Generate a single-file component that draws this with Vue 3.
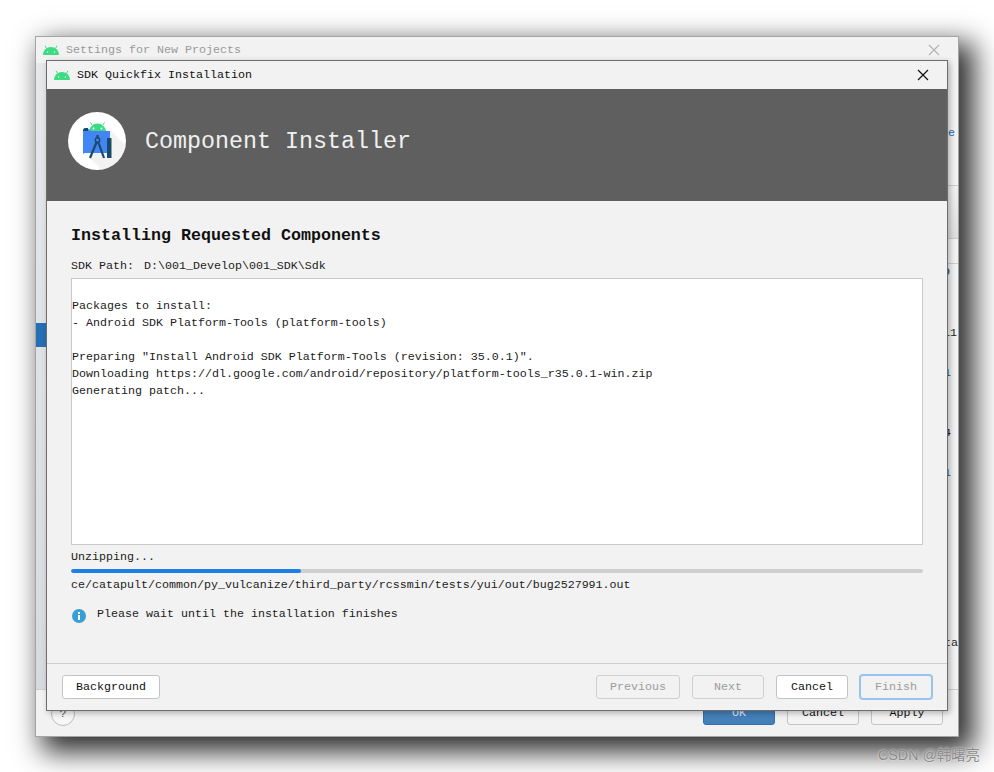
<script setup>
const logLines = [
  '',
  'Packages to install:',
  '- Android SDK Platform-Tools (platform-tools)',
  '',
  'Preparing "Install Android SDK Platform-Tools (revision: 35.0.1)".',
  'Downloading https://dl.google.com/android/repository/platform-tools_r35.0.1-win.zip',
  'Generating patch...'
]
const peeks = [
  { h: 60, text: '', cls: '', pr: 0 },
  { h: 20, text: 'e', cls: 'blue', pr: 3 },
  { h: 43, text: '', cls: 'line', pr: 0 },
  { h: 53, text: '', cls: 'band', pr: 0 },
  { h: 25, text: '', cls: 'line', pr: 0 },
  { h: 16, text: '0', cls: '', pr: 8 },
  { h: 45, text: '', cls: '', pr: 0 },
  { h: 16, text: '11', cls: '', pr: 1 },
  { h: 24, text: '', cls: '', pr: 0 },
  { h: 16, text: '1', cls: 'teal', pr: 7 },
  { h: 44, text: '', cls: '', pr: 0 },
  { h: 16, text: '4', cls: '', pr: 7 },
  { h: 24, text: '', cls: '', pr: 0 },
  { h: 16, text: '1', cls: 'teal', pr: 7 },
  { h: 154, text: '', cls: '', pr: 0 },
  { h: 16, text: 'ta', cls: '', pr: 0 }
]
</script>

<template>
  <div class="desk">
    <section class="win outer">
      <header class="outer-title">
        <svg class="droid" viewBox="0 0 16 10"><path d="M0 10a8 8 0 0 1 16 0z" fill="#3ddc84"/><path d="M3.6 3.6 2 .8M12.4 3.6 14 .8" stroke="#3ddc84" stroke-width="1"/><circle cx="4.6" cy="7" r=".7" fill="#e8f8ef"/><circle cx="11.4" cy="7" r=".7" fill="#e8f8ef"/></svg>
        <span>Settings for New Projects</span>
        <svg class="close faint" viewBox="0 0 12 12"><path d="M1 1l10 10M11 1 1 11" stroke="#b4b4b4" stroke-width="1.2"/></svg>
      </header>
      <div class="outer-body">
        <aside class="side"><div class="sel"></div></aside>
        <div class="peek-col">
          <div v-for="(p, i) in peeks" :key="i" class="peek" :class="p.cls" :style="{ height: p.h + 'px', paddingRight: p.pr + 'px' }">{{ p.text }}</div>
        </div>
      </div>
      <footer class="outer-foot">
        <span class="help">?</span>
        <div class="foot-btns">
          <span class="obtn ok">OK</span>
          <span class="obtn">Cancel</span>
          <span class="obtn">Apply</span>
        </div>
      </footer>
    </section>

    <section class="win inner">
      <header class="inner-title">
        <svg class="droid" viewBox="0 0 16 10"><path d="M0 10a8 8 0 0 1 16 0z" fill="#3ddc84"/><path d="M3.6 3.6 2 .8M12.4 3.6 14 .8" stroke="#3ddc84" stroke-width="1"/><circle cx="4.6" cy="7" r=".7" fill="#e8f8ef"/><circle cx="11.4" cy="7" r=".7" fill="#e8f8ef"/></svg>
        <span>SDK Quickfix Installation</span>
        <svg class="close" viewBox="0 0 12 12"><path d="M1 1l10 10M11 1 1 11" stroke="#111" stroke-width="1.2"/></svg>
      </header>
      <div class="banner">
        <svg class="logo" viewBox="0 0 58 58">
          <defs><clipPath id="disc"><circle cx="29" cy="29" r="29"/></clipPath></defs>
          <circle cx="29" cy="29" r="29" fill="#fff"/>
          <path d="M42 18 58 34V58H34L20 44z" fill="#ececec" clip-path="url(#disc)" opacity=".7"/>
          <path d="M21 20a8.500 8.500 0 0 1 17 0v2H21z" fill="#3ddc84"/>
          <path d="M24 13 22.500 10.500M35 13 36.500 10.500" stroke="#3ddc84" stroke-width="1"/>
          <circle cx="25.500" cy="16.500" r="1" fill="#fff"/><circle cx="33.500" cy="16.500" r="1" fill="#fff"/>
          <path d="M15 19c0-2 1-3 3-3 3 0 3 3 6 3h18v22H18a3 3 0 0 0-3 1z" fill="#4285f4"/>
          <path d="M15 19c0-2 1-3 3-3h2v3z" fill="#1a4a68"/>
          <path d="M29.500 23v3M29.500 28l-7.500 18M29.500 28l6.500 18" stroke="#1a4a68" stroke-width="2.200" fill="none"/>
          <circle cx="29.500" cy="28" r="2.200" fill="#4285f4" stroke="#1a4a68" stroke-width="1.400"/>
          <rect x="39" y="26" width="4.500" height="20" rx=".6" fill="#1a4a68"/>
        </svg>
        <span class="banner-text">Component Installer</span>
      </div>
      <main class="content">
        <h2>Installing Requested Components</h2>
        <div class="path-row"><span>SDK Path:</span><span>D:\001_Develop\001_SDK\Sdk</span></div>
        <div class="log">
          <div v-for="(l, i) in logLines" :key="i" class="log-line">{{ l }}</div>
        </div>
        <div class="status">Unzipping...</div>
        <div class="track"><div class="fill" :style="{ width: '27%' }"></div></div>
        <div class="file">ce/catapult/common/py_vulcanize/third_party/rcssmin/tests/yui/out/bug2527991.out</div>
        <div class="note">
          <svg class="info" viewBox="0 0 14 14"><circle cx="7" cy="7" r="7" fill="#389fd6"/><rect x="6" y="6" width="2" height="5" fill="#fff"/><rect x="6" y="3" width="2" height="2" fill="#fff"/></svg>
          <span>Please wait until the installation finishes</span>
        </div>
      </main>
      <footer class="inner-foot">
        <button class="btn bg">Background</button>
        <div class="grow"></div>
        <button class="btn off wide">Previous</button>
        <button class="btn off">Next</button>
        <button class="btn">Cancel</button>
        <button class="btn off focus">Finish</button>
      </footer>
    </section>

    <div class="mark">CSDN @韩曙亮</div>
  </div>
</template>

<style>
html, body { margin: 0; background: #fff; }
</style>

<style scoped>
.desk {
  position: relative;
  width: 994px;
  height: 772px;
  overflow: hidden;
  background: #fff;
  font: 11.67px/17px "Liberation Mono", monospace;
  color: #1c1c1c;
}
.win { position: absolute; box-sizing: border-box; display: flex; flex-direction: column; }
.outer {
  left: 35px; top: 36px; width: 924px; height: 701px;
  background: #f2f2f2;
  border: 1px solid #a4a4a4;
  box-shadow: 11px 11px 26px 4px rgba(0,0,0,.82);
}
.outer-title {
  height: 26px; flex: none; display: flex; align-items: center; padding: 0 18px 0 7px; gap: 7px;
  color: #9a9a9a;
}
.droid { width: 16px; height: 10px; flex: none; }
.close { width: 12px; height: 12px; margin-left: auto; flex: none; }
.outer-body { flex: 1; display: flex; min-height: 0; }
.side { width: 11px; flex: none; background: linear-gradient(#e6e8ea, #d7dbe0); padding-top: 260px; box-sizing: border-box; }
.sel { height: 24px; background: #2470b3; }
.peek-col { flex: 1; display: flex; flex-direction: column; min-width: 0; overflow: hidden; }
.peek { flex: none; display: flex; align-items: center; justify-content: flex-end; box-sizing: border-box; overflow: hidden; }
.peek.blue { color: #2470b3; }
.peek.teal { color: #175f78; }
.peek.line { border-bottom: 1px solid #cdcdcd; }
.peek.band { background: linear-gradient(#f0f0f0, #dedede); border-bottom: 1px solid #cdcdcd; }
.outer-foot {
  height: 47px; flex: none; display: flex; align-items: center; padding: 0 15px;
  border-top: 1px solid #cdcdcd; box-sizing: border-box;
}
.help { width: 22px; height: 22px; border: 1px solid #bbb; border-radius: 50%; background: #f7f7f7; display: flex; align-items: center; justify-content: center; margin-top: 2px; color: #555; }
.foot-btns { margin-left: auto; display: flex; gap: 12px; }
.obtn { width: 72px; height: 24px; box-sizing: border-box; border: 1px solid #c4c4c4; border-radius: 3px; background: #f4f4f4; text-align: center; line-height: 22px; color: #111; }
.obtn.ok { background: #4480bb; border-color: #366ea5; color: #e4edf6; }

.inner {
  left: 46px; top: 60px; width: 902px; height: 651px;
  background: #f2f2f2;
  border: 1px solid #6d6d6d;
  box-shadow: 2px 2px 6px rgba(0,0,0,.28);
}
.inner-title { height: 28px; flex: none; display: flex; align-items: center; gap: 7px; padding: 0 18px 0 7px; color: #111; }
.banner { height: 112px; flex: none; background: #5f5f5f; display: flex; align-items: center; padding: 0 0 9px 21px; box-sizing: border-box; gap: 19px; }
.logo { width: 58px; height: 58px; flex: none; }
.banner-text { font-size: 23.33px; line-height: 28px; color: #f0f0f0; margin-top: 2px; }
.content { flex: 1; display: flex; flex-direction: column; padding: 25px 24px 0; min-height: 0; }
h2 { margin: 0; font-size: 16.67px; line-height: 20px; font-weight: 700; color: #111; }
.path-row { display: flex; gap: 10px; margin-top: 12px; }
.log { margin-top: 3px; padding-top: 2px; height: 267px; flex: none; box-sizing: border-box; background: #fff; border: 1px solid #c9c9c9; overflow: hidden; }
.log-line { height: 17px; white-space: pre; }
.status { margin-top: 4px; }
.track { height: 4px; margin-top: 3px; background: #cfcfcf; border-radius: 2px; overflow: hidden; flex: none; }
.fill { height: 100%; background: #1f80e4; border-radius: 2px; }
.file { margin-top: 4px; white-space: nowrap; }
.note { display: flex; align-items: center; gap: 11px; margin-top: 12px; padding-left: 1px; }
.info { width: 14px; height: 14px; flex: none; margin-top: 2px; }
.inner-foot { height: 47px; flex: none; box-sizing: border-box; border-top: 1px solid #cfcfcf; display: flex; align-items: center; gap: 12px; padding: 0 15px 0 15px; }
.grow { flex: 1; }
.btn {
  width: 72px; height: 24px; padding: 0; box-sizing: border-box;
  font: inherit; color: #111; background: #fff;
  border: 1px solid #c4c4c4; border-radius: 3px;
}
.btn.bg { width: 98px; }
.btn.wide { width: 84px; }
.btn.off { background: #f2f2f2; color: #9c9c9c; border-color: #d0d0d0; }
.btn.focus { border-color: #97c3f0; box-shadow: 0 0 0 1px #97c3f0; }
.mark {
  position: absolute; left: 878px; top: 746px;
  font: 14.3px/18px "Liberation Sans", "Noto Sans CJK SC", sans-serif;
  color: #8c8c8c;
  text-shadow: 0 0 2px rgba(255,255,255,.8);
}
</style>
